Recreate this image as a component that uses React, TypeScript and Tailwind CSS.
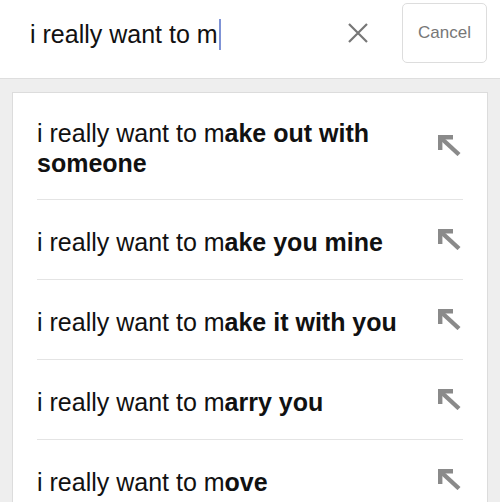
import React from "react";

const rows: { rest: string }[] = [
  { rest: "ake out with someone" },
  { rest: "ake you mine" },
  { rest: "ake it with you" },
  { rest: "arry you" },
  { rest: "ove" },
];

function ArrowIcon() {
  return (
    <svg width="24" height="22" viewBox="0 0 24 22" className="shrink-0 mr-[2px]">
      <path d="M3.2 16 V3.2 H16" fill="none" stroke="#8a8a8a" strokeWidth="4.4" strokeLinejoin="miter" />
      <path d="M4 4 L22 20.5" fill="none" stroke="#8a8a8a" strokeWidth="4.4" />
    </svg>
  );
}

export default function App() {
  return (
    <div
      className="w-[500px] h-[502px] overflow-hidden bg-[#eeeeee]"
      style={{ fontFamily: '"Liberation Sans", Arial, Helvetica, sans-serif' }}
    >
      <div className="bg-white pt-[3px] pb-[15px] border-b border-[#dedede]">
        <div className="flex items-center h-[60px] pl-[30px] pr-[13px]">
          <div className="flex-1 flex items-center pt-[2px]">
            <span className="text-[25px] leading-[30px] text-[#111]">i really want to m</span>
            <span className="w-[2px] h-[31px] bg-[#7f93d6] ml-[1px] mt-[1px]" />
          </div>
          <svg width="20" height="20" viewBox="0 0 20 20" className="shrink-0">
            <path d="M1 1 L19 19 M19 1 L1 19" stroke="#777" strokeWidth="2.2" fill="none" />
          </svg>
          <div className="ml-[34px] w-[85px] h-[60px] rounded-[5px] border border-[#dddddd] flex items-center justify-center text-[17px] text-[#777]">
            Cancel
          </div>
        </div>
      </div>
      <div className="mx-[12px] mt-[13px] bg-white border border-[#dcdcdc] px-[24px]">
        {rows.map((r, i) => (
          <div
            key={i}
            className={
              i === 0
                ? "flex items-center justify-between pt-[19px] pb-[21px]"
                : "flex items-center justify-between border-t border-[#e4e4e4] pt-[21px] pb-[22px]"
            }
          >
            <p className="pt-[6px] text-[25px] leading-[30px] text-[#111] pr-[20px]">
              {"i really want to m"}
              <b className="font-bold">{r.rest}</b>
            </p>
            <ArrowIcon />
          </div>
        ))}
      </div>
    </div>
  );
}
